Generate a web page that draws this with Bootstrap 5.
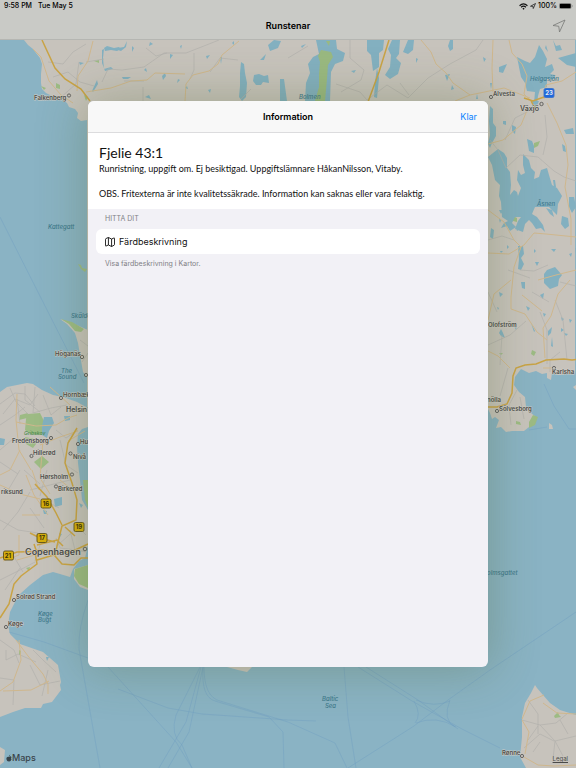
<!DOCTYPE html>
<html lang="sv">
<head>
<meta charset="utf-8">
<meta name="viewport" content="width=device-width, initial-scale=1">
<title>Runstenar</title>
<link href="https://cdn.jsdelivr.net/npm/bootstrap@5.3.0/dist/css/bootstrap.min.css" rel="stylesheet">
<style>
body{font-family:Inter,"Liberation Sans",sans-serif;background:#8ab3c4;color:#000;font-size:9px;line-height:12px}
.map-canvas{z-index:0}
.map-canvas text{font-family:Inter,"Liberation Sans",sans-serif;font-size:6px;font-weight:600;fill:#4d4d4b;stroke:#d0cdc6;stroke-width:1px;paint-order:stroke;stroke-linejoin:round}
.map-canvas .wet{fill:#40798c;stroke:none;font-style:italic;font-weight:500}
.map-canvas .shield{font-size:6px;font-weight:700;stroke:none;fill:#3c3208;text-anchor:middle}
.top-bar{background:#c9cac6;border-bottom:1px solid #b5b6b2;z-index:2}
.status-row{font-size:7px;font-weight:500;line-height:12px;padding:0 3px 0 4px}
.clock-group{gap:6px}
.signal-group{gap:2px}
.title-row{display:grid;grid-template-columns:1fr auto 1fr;height:27px;padding:0 10px}
.bar-title{font-size:9px;line-height:12px;font-weight:600}
.icon-btn{line-height:0;color:#777976}
.stage{padding:61px 16px 101px;z-index:1}
.sheet{max-width:400px;background:#f2f1f6;border-radius:6px;box-shadow:0 0 48px 4px rgba(75,95,40,.3)}
.sheet-head{display:grid;grid-template-columns:1fr auto 1fr;height:32px;background:#f8f8f8;border-bottom:1px solid #dcdcde;padding:0 11px}
.done-btn{color:#0a84ff;font-size:9px;line-height:12px}
.stone-info{font-family:Lato,"Open Sans",sans-serif;padding:10px 11px 9px;color:#111}
.stone-info h2{font-size:14px;line-height:20px;font-weight:400}
.stone-info p{font-size:9px;line-height:12px}
.stone-info p+p{margin-top:13px}
.caption-text{font-size:7px;line-height:10px;color:#808085;padding:5px 9px}
.route-btn{background:#fff;border-radius:6px;height:25px;padding:0 9px;font-size:9px;color:#111}
.map-foot{z-index:1;padding:0 8px 4px 6px}
.maps-mark{font-size:9px;line-height:12px;font-weight:500;color:#39444a}
.legal-link{font-size:6px;line-height:10px;color:#4b4b49}
</style>
<script src="https://cdn.jsdelivr.net/npm/bootstrap@5.3.0/dist/js/bootstrap.bundle.min.js"></script>
</head>
<body>
<div class="min-vh-100 position-relative overflow-hidden d-flex flex-column">
<svg class="map-canvas position-absolute top-0 start-0 w-100 h-100" viewBox="0 0 576 768" preserveAspectRatio="xMidYMid slice" role="img" aria-label="Karta">
  <rect width="576" height="768" fill="#8ab3c4"/>
  <!-- land -->
  <g fill="#c7c3bc">
    <path d="M24 40l4 5 5 4 3 4 4 5 2 6-1 10 0 9 1 6 4 4 6 3 4 2 7 2 4 3 2 4 6 2 3 4-1 5 4 3 6-1 0 287 400 0 3 6 2 6 3-2 4 3-3 8 5-1 5 5 6-1 6 0 6 0 5-4 7-10-5-4-5-6-1-10-6-5-5-7 1-8 6-8 8 4 7-2 6 3 5-1 0 5 4 2 1-7 7 2 16-2V40z"/>
    <path d="M60 319l12 4 16 7v48l-5-6-3-17-2-12-3-10-8-9z"/>
    <path d="M0 392l7-5 10-2 10-2 6 1 9 6 11 5 10 2 14 5 11 6v19l-6 2-4 5-1 13 1 16 2 17 2 20 6 10v35l-3 13-6 3-6 8-3 8-10-3-7-2-10 3-13 10-10 9-5 8-5 10-2 13 2 9 10 10 23 8 15 13 3 17-1 3 1 5-9 12-9 2-2 4-16 0-12 4-13 5z"/>
    <path d="M74 569l14-4v25l-8-3-6-8zM0 747l5 3-1 12-4 3zM227 667l11 3 9 2 5-5zM535 685l2 3 6 7 7 8 10 7 16 5v53h-50l-6-11 2-20 0-20 3-14 6-10zM549 423l3 2 1 4-4 0zM576 385l-3 2 3 3z"/>
  </g>
  <!-- parks -->
  <g fill="#9dbb84">
    <path d="M61 319l11 3 12 7-3 3-6-1-6-7zM78 264l3 1 1 3 5 1-2 3-4-3zM28 414l12-1 4 8-2 14-12-1-5-4 1-11zM20 415l8-2-1 5-8 2zM34 462l8-6 7 6-8 7zM75 569l13-4v23l-9-4-5-8zM533 415l5 2-3 8-6 3 0-6zM516 421l4 1 1 3-5-1zM534 143l6-2-2 5-4 2zM513 216l4 2 0 4-4-1zM83 480l5 0v28l-3-8zM554 716l4-4 1 3 2 2-6 1zM56 83l4 2 0 4-4-1zM41 86l5 2-2 2zM94 61l5-1 0 3zM532 350l4 2-2 4-3-2zM499 353l4 0-2 2zM25 437l5 1 9 2-6 8-7-4zM84 95l4 2-2 4zM19 650l2 1 0 4-2 0zM26 568l4-1-1 4z"/>
  </g>
  <!-- lakes -->
  <g fill="#83b0c0">
    <path d="M316 40h20l1 9 8 4-2 8-8 3-4 8-1 29h-25l1-18 4-10-2-9 5-7 6-3z"/>
    <path d="M367 40h17l-1 10-4 3 0 14-6 4-2-16-4-4zM392 40h8l-1 14-3 4 5 5-3 11-8 5-5-4 5-8 1-12-3-6zM408 40h6l-1 10-5 4-5-2zM450 40h3l0 9-3 2-2-5zM377 68l2 10-2 20-3-1 1-15z"/>
    <path d="M241 62l3 2 1 9 2 10-1 14-4 4-3-4 1-11 0-13zM254 75l5-1 5 2 4-1 1 8-6-1-2 3-5 0-3-4zM268 45l6-5 7 1-3 7-8 3zM260 60l6-6-2 6zM280 79h4l3 22h-7zM104 48l3-2 7 2 5-1 2 2-4 2-6-1-6 1zM118 48l6-1 3-6-1 6-5 4-3-1zM102 50l2-1-1 9 1 11 7-2 2 2-8 2-3-8zM122 77l9 0-3 2-5 0zM97 80l1 4-5 8-1-1zM132 46l2 2-2 4zM150 42l3 2-4 2zM170 54l3 1-3 4zM180 46l2-1-1 4zM206 56l4-1-3 4zM144 70l2-2 1 4zM162 76l3-3 1 3-3 4zM185 88l2-2 1 3zM145 97l4-2 2 4zM208 90l3-1-1 4zM220 57l2 0-1 7zM79 62l5 1-4 2zM178 79l2 1-3 3zM232 43l2-2 0 4z"/>
    <path d="M517 57l8 4 5 2 5-6 4-12 4 6 4 8-2 8 7-3 2 6-4 4 5 1 0 4-8 0 0 8-7 2-2 7-1 8-3-1 1-11-8-1-2-8-4-6zM558 58l18-5v14l-9-2zM553 40l3 6 4-1 2 5-6 1zM532 101l7 0-3 7-4 1zM499 67l8-3-4 9-4-1zM490 83l2 0-1 6zM546 45l2 7-3-4zM483 57l3 2-2 3zM452 85l2 4-3 1zM477 94l1 5-2 0zM301 46l5-2-4 4zM351 71l5-1-2 3zM445 75l5-1-3 7zM416 58l2 1-2 4z"/>
    <path d="M490 106l3 3 0 14 3 4 0 9-4 7-2 5-2-4 2-9-1-14zM498 149l6 4 3 5 0 10 3 4 1 13-1 10 4-5 3 2 1 4 3-8-4-8 1-10 3 5 4-2-2-8 0-11 6 6 2 8 4 4-1 7 5-2 2-7 6-2 2 7 3 10 5 3 5 8-4 8-1 11-3-3-5-5-7 0-7 0-3 7 5 3 6 8 2 7-4-4-5 1-4-6-3-3-4 4-2 8-8-3 3-8 3-4-6 0-3 6 4 4-6 4-3-5-6 2 3-5 4-2-6-4-1-15-2-6 1-11-5-5-3-15-4-8zM527 139l5 2 2 5 0 7-5-2zM564 130l9-2 1 6-8 0zM503 121l3 0 0 4-3-1zM512 125l4 2-1 7-3-3zM562 144l3 2 1 6-3-1zM569 197l5 0 2 10-4 6-3-6zM562 216l6 2 1 8-4 3-4-5zM553 180l2 0 1 7-2 0zM546 208l6 2 2 7-4-3zM518 246l5 0 1 8-3 4 3 6-3 6-3-1 1-10zM547 270l8-3 7 8-3 4-1 7-8 3-6-6 0-9zM491 228l3 2-1 9-3-2zM551 249l5 0-2 3zM535 262l4 0-2 4zM547 280l11 0-2 6-5 0zM521 282l4 0 0 7-3-1zM500 251l3 0-2 2zM507 245l2 2-2 2zM499 292l4 2-3 3zM540 295l4-2-1 6zM526 306l4 2-2 3zM543 313l3 1-2 3zM561 317l3 2-2 2zM501 329l2 4 2 5-4-2-2-3zM514 326l3 0-1 4zM548 331l4-4-1 6-3 3zM552 337l1 10-2-1zM561 328l3 2-3 2zM499 210l4 0-2 4zM499 219l2 1-1 3zM575 248l1 0 0 5zM569 254l3-1-1 4zM516 227l4 2-3 2zM534 249l2 2-2 2zM569 319l3 1-2 3zM497 307l2 1-1 2zM531 323l4 8-1 1zM564 333l4 1-2 2z"/>
    <path d="M44 417l8 0 2 6-5 8-2 7-5-3 0-9zM64 416l6 0 0 4-5 1zM0 438l5 1-1 6-4 0zM54 499l8-2 0 8-7 2zM59 533l3 1-2 3zM46 657l3 0-2 4zM79 503l4 2-2 3zM43 510l4 1 0 3-3 0z"/>
  </g>
  <path d="M321 50l10 2 2 5-5 8-1 14-2 22h-10l4-14 0-13 1-12-2-6zM326 41l4 0-1 5z" fill="#9ab981"/>
  <!-- local roads -->
  <g fill="none" stroke="#b2b0ac" stroke-width=".7">
    <path d="M48 62l15 2 10-12 13-8M53 77l15-5 12 10 14 4M60 98l16-14 3-22M86 62l18-3M102 82l6-13 14 1 22-3 20-14 22 0 23-9 10-4M146 48l10 8 11-3M194 53v17l-4 9M210 72l10-14 18 2M124 81l20 0M143 87v14M241 99l10-10M288 58l20-12M350 40l0 18 14 12-3 10-20 12M336 84l24 8 7 8 20-15 21 13 20-20 22-14 26-14 7-10M400 83l9 12M490 140l8 10 8 18M506 168l14-13 18 2 16 14 10 6 12 4M545 115l2 22-4 18M505 140l10-22 20-10M488 240l14-4 12 4M520 270l14 1 14-6M508 270l22 8M488 292l9 20M502 335l-2 30M508 368l-8 28M517 390l-8 15 2 20M520 397l4 22M488 345l22-10 16-14M540 312l7 18 0 34M555 300l8 20 4 40M560 282l16 4M532 292l17 10M550 372l0-12 10-8"/>
    <path d="M0 404l15-11 10 1 10 12M3 414l12-15 15 6 8-11M10 388l6 14 12 12M20 424l-3-25M25 386l0 14 15 12M35 387l-2 26 18-5 16-3M43 395l8 20 10-8M0 425l15-10 10-8M0 450l14-12M0 462l18 12M7 492l13-22M24 470l16 14M47 470l-7 26M30 490l40-10M60 440l6 25 12 8M56 430l10 8 12-8M3 530l15-18 12-20M0 520l18 10 20 3M30 508l14 20M0 580l20-10 15-8M5 590l15-22M13 555l10 17M40 545l-5 16M56 538l4 10 25 3M70 530l5 20 11 2M58 545l20-18 8 8M44 500l15 8M0 640l14 10 5 13M6 660l12-6 18 8M33 650l10 10 13 12M13 705l1-25-14-2M30 665l10 20 20-4M48 670l-6 26M6 650l0 10M80 340l8 6M82 362l6-9"/>
    <path d="M528 700l10 14 0 20M522 720l18 5 16-2 12-10M528 740l10-14M540 725l15 16 21-5M555 741l-2 18M555 741l8 15M524 748l16-14 14 7M560 720l8 14M533 752l7-10"/>
  </g>
  <!-- secondary roads -->
  <g fill="none" stroke="#cfb78d" stroke-width="1">
    <path d="M33 49l8 8 8 24 12 14 12 8M93 41l-5 20-10 15-1 15M86 92l25-4 20-7 16-1 8-7 30 1M239 41l-17 14-4 9-9 7-16 4-7 9-1 17"/>
    <path d="M421 40l10 12 5 12 10 9 7 10 17 12-15 6M470 95l34-7 26 10M493 40l-1 28 1 24M509 40l3 13 10 11 5 12-3 18 7 7M576 72l-14 9-16 4-2 14M547 103l10 20 9 22 2 20-3 22 6 32 0 26M488 144l15-4 18-15 7-17M576 237l-30-3-12-1-10 12-15 9-21-1M488 210l16 12 10 18 7 7-7 20-3 30 0 12 14 5 12 18 10 8M576 270l-20 5-18 5M570 280l-12 14-7 22-8 12 2 30M511 280l-17 14-6 26M488 351l10 5 12 12M522 295l20 16"/>
    <path d="M17 394l-1 26 3 30 12 20M16 422l20 4 20-1 12-7 9-3M50 387l20 18M40 445l20-8 18-6M43 440l-3 38 10 16M32 470l7 20M20 450l-10 20-10 5M68 441l17-10M60 480l10 8M26 475l8 20 14 20M0 485l20 9 20 5M19 535l0 20-16 6M17 560l18-5M40 515l-18 0M19 640l2 20-8 22-13 9M16 640l12 16 15 18 5 10 0 10M3 691l28-1 18-9M544 695l-14 6-8 18M522 720l7 12-4 22M576 714l-19-1-14-10M524 757l14 8 16 1 22-1M552 368l-9 0"/>
  </g>
  <g fill="none" stroke="#c9a345" stroke-width="1.500">
    <path d="M42 40l13 28 10 11 16 10 9 12M389 40l-10 32-11 30M524 98l9 3 11-4M531 101l4 7M488 407h9l10-3 5-11 1-17 3-8 9-3 11-1 10-4 18-1 8 1 14-2M77 428l-9 15-3 20 7 20 5 17-1 20-14 6-5 20-2 10 7 8 12 1 7-7 10 0M35 484l12 13 9 16 6 12M37 545l20-5 6 6M0 558l17-6 38-1M56 551l-20-1-2-6M35 552l2 12-16 12-7 8-5 20-9 14M37 560l20-6 14-2 17-8M65 527l10 9M30 533l10 5 15 4"/>
  </g>
  <!-- ferry lines -->
  <g fill="none" stroke="#719fc0" stroke-opacity=".55" stroke-width=".8">
    <path d="M0 217l42 83 42 83M88 600q-10 28-9 49l21 119M9 632l35 10 44 16M108 667l68 75 16 26M118 689l50 19 34 6 86 6 28 1M200 667l-24 48q-6 20 6 30l10 23M201 667l-15 55-27 46M203 667l-14 65-21 36M203 667q-2 30 12 34l54 16 14 15 1 36M204 667q0 30 16 34l68 21 47 21 12 25M344 667l4 50 8 51M358 667l54 34 50 28 38 19M366 667l52 33 40 29M348 768l66-42 34-26 42-30 86-58M414 701q8 14 1 22M416 700q18 8 34 1M450 700q-8 20 5 27M416 723q20-8 40 4M544 384l10 22 15 23h7M529 430l18-3"/>
  </g>
  <g fill="#c7c3bc" stroke="#4d4d4b" stroke-width=".8">
    <circle cx="69" cy="95.500" r="1.600"/><circle cx="491" cy="97" r="1.600"/><circle cx="541.500" cy="104" r="1.700"/><circle cx="82" cy="357" r="1.700"/><circle cx="86" cy="375" r="1.600"/><circle cx="61" cy="398" r="1.600"/><circle cx="51" cy="438" r="1.600"/><circle cx="31.500" cy="456" r="1.600"/><circle cx="78" cy="444" r="1.600"/><circle cx="70.500" cy="453.500" r="1.600"/><circle cx="72" cy="474.500" r="1.600"/><circle cx="56" cy="486.500" r="1.600"/><circle cx="85" cy="549" r="1.800"/><circle cx="14" cy="600" r="1.600"/><circle cx="6" cy="627" r="1.600"/><circle cx="554" cy="368" r="1.600"/><circle cx="497" cy="411" r="1.600"/><circle cx="522" cy="756" r="1.600"/>
  </g>
  <g>
    <text x="34" y="100">Falkenberg</text><text x="493" y="96">Alvesta</text><text x="520" y="111" style="font-size:7px">Växjö</text>
    <text x="55" y="356">Höganäs</text><text x="63" y="397">Hornbæk</text><text x="66" y="412" style="font-size:7px">Helsin</text><text x="12" y="443">Fredensborg</text><text x="33" y="455">Hillerød</text><text x="80" y="444">Hu</text><text x="73" y="459">Nivå</text><text x="40" y="479">Hørsholm</text><text x="58" y="491">Birkerød</text><text x="1" y="494">riksund</text>
    <text x="25" y="555" style="font-size:9px">Copenhagen</text><text x="16" y="599">Solrød Strand</text><text x="8" y="626">Køge</text>
    <text x="488" y="327">Olofström</text><text x="552" y="374">Karlsha</text><text x="487" y="402">nölla</text><text x="499" y="411">Sölvesborg</text><text x="502" y="755">Rønne</text>
    <text class="wet" x="48" y="229">Kattegatt</text><text class="wet" x="71" y="318">Skälde</text><text class="wet" x="61" y="373">The</text><text class="wet" x="58" y="379">Sound</text><text class="wet" x="38" y="616">Køge</text><text class="wet" x="38" y="622">Bugt</text><text class="wet" x="322" y="701">Baltic</text><text class="wet" x="325" y="708">Sea</text><text class="wet" x="487" y="575">olmsgattet</text><text class="wet" x="299" y="99">Bolmen</text><text class="wet" x="530" y="81">Helgasjön</text><text class="wet" x="537" y="206">Åsnen</text><text class="wet" x="24" y="435" style="font-size:5px;fill:#4b8b50">Gribskov</text>
  </g>
  <g fill="#d6ae0d" stroke="#5e511a" stroke-width=".9">
    <rect x="41" y="499" width="10" height="9" rx="1.500"/><rect x="74" y="522.500" width="10" height="9" rx="1.500"/><rect x="37" y="533.500" width="10" height="9" rx="1.500"/><rect x="3.500" y="551" width="10" height="9" rx="1.500"/>
    <rect x="544" y="88.500" width="10" height="9" rx="1.500" fill="#1d67dc" stroke="#3a72c9"/>
  </g>
  <text class="shield" x="46" y="506">16</text><text class="shield" x="79" y="529">19</text><text class="shield" x="42" y="540">17</text><text class="shield" x="8" y="558">21</text><text class="shield" x="549" y="95" style="fill:#e4e9f2">23</text>
</svg>

<header class="top-bar position-relative">
  <div class="status-row d-flex justify-content-between">
    <div class="clock-group d-flex"><span>9:58 PM</span><span>Tue May 5</span></div>
    <div class="signal-group d-flex align-items-center">
      <svg width="9" height="7" viewBox="0 0 16 12" fill="none" stroke="#111" stroke-width="2.200" aria-hidden="true"><path d="M1 4.500q7-6 14 0M3.700 7.300q4.300-3.700 8.600 0"/><path d="M8 8.200l2 1.600-2 2-2-2z" fill="#111" stroke="none"/></svg>
      <svg width="6" height="6" viewBox="0 0 12 12" fill="none" stroke="#222" stroke-width="1.600" aria-hidden="true"><path d="M1 6.500L11 1 6.500 11 6 6.500z"/></svg>
      <span>100%</span>
      <svg width="14" height="6" viewBox="0 0 28 12" aria-hidden="true"><rect x=".5" y=".5" width="24" height="11" rx="3" fill="none" stroke="#777"/><rect x="1.500" y="1.500" width="22" height="9" rx="2"/><path d="M26 4q2 2 0 4z" fill="#555"/></svg>
    </div>
  </div>
  <div class="title-row align-items-center">
    <span></span><h1 class="bar-title m-0">Runstenar</h1>
    <button type="button" class="icon-btn btn border-0 p-0 ms-auto" aria-label="Visa min plats"><svg width="14" height="14" viewBox="0 0 28 28" fill="none" stroke="currentColor" stroke-width="1.600" stroke-linejoin="round"><path d="M2 13L26 2 15 26 13.500 14.500z"/></svg></button>
  </div>
</header>

<main class="stage position-relative flex-grow-1 d-flex justify-content-center">
  <section class="sheet w-100 overflow-hidden" role="dialog" aria-labelledby="sheetTitle">
    <div class="sheet-head align-items-center">
      <span></span><h2 id="sheetTitle" class="bar-title m-0">Information</h2>
      <button type="button" class="done-btn btn border-0 p-0 ms-auto">Klar</button>
    </div>
    <div class="stone-info bg-white">
      <h2 class="m-0">Fjelie 43:1</h2>
      <p class="mb-0">Runristning, uppgift om. Ej besiktigad. Uppgiftslämnare HåkanNilsson, Vitaby.</p>
      <p class="mb-0">OBS. Fritexterna är inte kvalitetssäkrade. Information kan saknas eller vara felaktig.</p>
    </div>
    <div class="px-2">
      <div class="caption-text text-uppercase">Hitta dit</div>
      <button type="button" class="route-btn btn border-0 w-100 d-flex align-items-center gap-1">
        <svg width="10" height="10" viewBox="0 0 22 22" fill="none" stroke="#111" stroke-width="2" stroke-linejoin="round" aria-hidden="true"><path d="M1 5q0-1 1-1.500L7.500 1l7 3.500L20 2q1 0 1 1v13.500q0 1-1 1.500l-5.500 3-7-3.500L2 20q-1 0-1-1zM7.500 1v16.500M14.500 4.500V21"/></svg>
        <span>Färdbeskrivning</span>
      </button>
      <div class="caption-text">Visa färdbeskrivning i Kartor.</div>
    </div>
  </section>
</main>

<footer class="map-foot position-absolute bottom-0 start-0 end-0 d-flex justify-content-between align-items-end">
  <span class="maps-mark d-flex align-items-center"><svg width="6" height="8" viewBox="0 0 14 16" fill="currentColor" aria-hidden="true"><path d="M10 0q0 3-3 4Q7 1 10 0zM7 5q4-2 6 1-3 2 0 5-2 5-4 5-2-1-4 0-3 0-4-5-1-7 6-6z"/></svg>Maps</span>
  <a class="legal-link" href="#legal">Legal</a>
</footer>
</div>
</body>
</html>
